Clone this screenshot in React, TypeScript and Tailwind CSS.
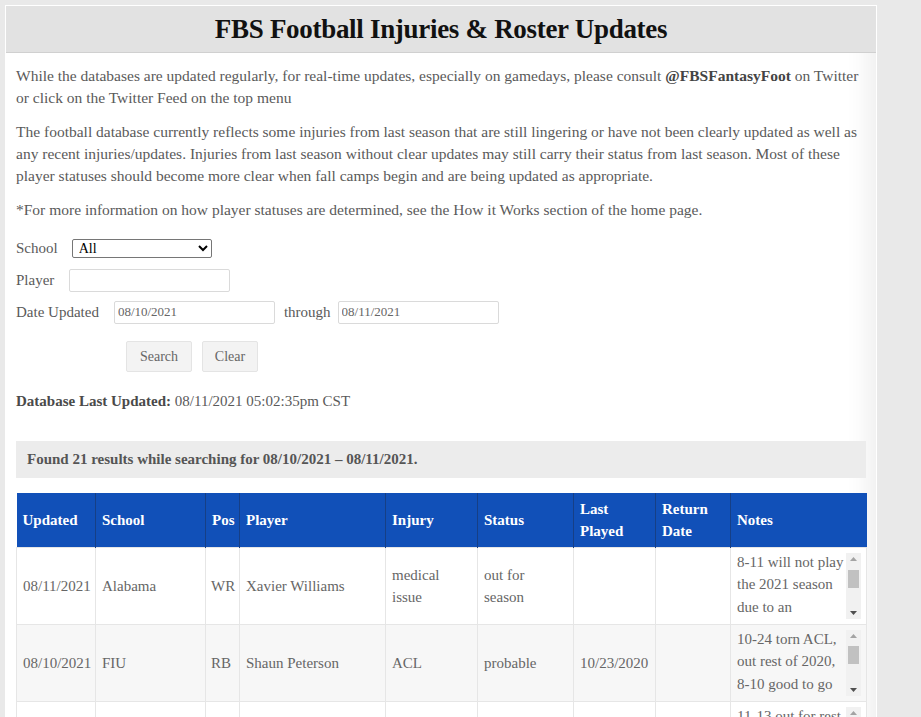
import { useState } from "react";

type Row = {
  updated: string;
  school: string;
  pos: string;
  player: string;
  injury: string;
  status: string;
  lastPlayed: string;
  returnDate: string;
  notes: string[];
};

const rows: Row[] = [
  {
    updated: "08/11/2021",
    school: "Alabama",
    pos: "WR",
    player: "Xavier Williams",
    injury: "medical issue",
    status: "out for season",
    lastPlayed: "",
    returnDate: "",
    notes: ["8-11 will not play", "the 2021 season", "due to an", "undisclosed", "medical issue"],
  },
  {
    updated: "08/10/2021",
    school: "FIU",
    pos: "RB",
    player: "Shaun Peterson",
    injury: "ACL",
    status: "probable",
    lastPlayed: "10/23/2020",
    returnDate: "",
    notes: ["10-24 torn ACL,", "out rest of 2020,", "8-10 good to go"],
  },
  {
    updated: "08/10/2021",
    school: "Georgia",
    pos: "WR",
    player: "Dominick Blaylock",
    injury: "ACL",
    status: "questionable",
    lastPlayed: "12/19/2020",
    returnDate: "",
    notes: ["11-13 out for rest", "of 2020, 8-10", "working back"],
  },
];

const columns = [
  { label: "Updated", width: "w-[79px]" },
  { label: "School", width: "w-[110px]" },
  { label: "Pos", width: "w-[34px]" },
  { label: "Player", width: "w-[146px]" },
  { label: "Injury", width: "w-[92px]" },
  { label: "Status", width: "w-[96px]" },
  { label: "Last Played", width: "w-[82px]" },
  { label: "Return Date", width: "w-[75px]" },
  { label: "Notes", width: "w-[136px]" },
];

function FakeScrollbar({ thumbTop }: { thumbTop: string }) {
  return (
    <div className="w-[15px] shrink-0 bg-[#f1f1f1] flex flex-col items-center justify-between py-[4px] relative">
      <svg width="7" height="4" viewBox="0 0 7 4">
        <path d="M0 4 L3.5 0 L7 4 Z" fill="#a3a3a3" />
      </svg>
      <div className={`absolute left-[2px] right-[2px] h-[18px] bg-[#c1c1c1] ${thumbTop}`}></div>
      <svg width="7" height="4" viewBox="0 0 7 4">
        <path d="M0 0 L3.5 4 L7 0 Z" fill="#505050" />
      </svg>
    </div>
  );
}

export default function App() {
  const [school, setSchool] = useState("All");

  return (
    <div className="min-h-[717px] bg-[#e9e9e9] pl-[5px] pt-[5px] font-['Liberation_Serif',serif]">
      <div className="w-[872px] bg-white border border-white shadow-[inset_-26px_0_24px_-18px_rgba(0,0,0,0.07)]">
        {/* Title band */}
        <div className="h-[47px] bg-[#e2e2e2] border-b border-[#d0d0d0] flex items-center justify-center">
          <h1 className="text-[27px] font-bold text-[#111] tracking-[-0.3px] leading-none">
            FBS Football Injuries &amp; Roster Updates
          </h1>
        </div>

        <div className="px-[10px] pt-[12px] pb-[20px] text-[#5a5a5a]">
          <p className="text-[15.5px] leading-[22px] whitespace-nowrap">
            While the databases are updated regularly, for real-time updates, especially on gamedays, please consult{" "}
            <b className="text-[#444]">@FBSFantasyFoot</b> on Twitter
            <br />
            or click on the Twitter Feed on the top menu
          </p>
          <p className="mt-[12px] text-[15.5px] leading-[22px] whitespace-nowrap">
            The football database currently reflects some injuries from last season that are still lingering or have not been clearly updated as well as
            <br />
            any recent injuries/updates. Injuries from last season without clear updates may still carry their status from last season. Most of these
            <br />
            player statuses should become more clear when fall camps begin and are being updated as appropriate.
          </p>
          <p className="mt-[12px] text-[15.5px] leading-[22px] whitespace-nowrap">
            *For more information on how player statuses are determined, see the How it Works section of the home page.
          </p>

          {/* Search form */}
          <div className="mt-[11px] text-[15px] text-[#5a5a5a]">
            <div className="flex items-center h-[32px]">
              <span className="mr-[14px]">School</span>
              <select
                value={school}
                onChange={(e) => setSchool(e.target.value)}
                className="w-[140px] h-[19px] border border-[#767676] rounded-[2px] text-[14px] text-black bg-white pl-[2px] appearance-auto"
              >
                <option>All</option>
                <option>Alabama</option>
                <option>FIU</option>
              </select>
            </div>
            <div className="flex items-center h-[32px]">
              <span className="mr-[15px]">Player</span>
              <input className="w-[161px] h-[23px] border border-[#dadada] rounded-[2px] bg-white" />
            </div>
            <div className="flex items-center h-[32px]">
              <span className="mr-[15px]">Date Updated</span>
              <input
                defaultValue="08/10/2021"
                className="w-[161px] h-[23px] border border-[#dadada] rounded-[2px] bg-white px-[3px] text-[13px] text-[#666]"
              />
              <span className="ml-[9px] mr-[7px]">through</span>
              <input
                defaultValue="08/11/2021"
                className="w-[161px] h-[23px] border border-[#dadada] rounded-[2px] bg-white px-[3px] text-[13px] text-[#666]"
              />
            </div>
            <div className="flex gap-[10px] pl-[110px] mt-[13px]">
              <button className="w-[66px] h-[31px] bg-[#f3f3f3] border border-[#e4e4e4] rounded-[2px] text-[14px] text-[#666]">
                Search
              </button>
              <button className="w-[56px] h-[31px] bg-[#f3f3f3] border border-[#e4e4e4] rounded-[2px] text-[14px] text-[#666]">
                Clear
              </button>
            </div>
          </div>

          <p className="mt-[18px] text-[15px] text-[#5a5a5a]">
            <b className="text-[#4a4a4a]">Database Last Updated:</b> 08/11/2021 05:02:35pm CST
          </p>

          <div className="mt-[28px] h-[37px] bg-[#ececec] flex items-center px-[11px] text-[15px] font-bold text-[#555]">
            Found 21 results while searching for 08/10/2021 – 08/11/2021.
          </div>

          {/* Results */}
          <table className="mt-[15px] w-[850px] table-fixed border-collapse text-[15px]">
            <colgroup>
              {columns.map((c) => (
                <col key={c.label} className={c.width} />
              ))}
            </colgroup>
            <thead>
              <tr className="bg-[#1150b8] text-white h-[54px]">
                {columns.map((c, i) => (
                  <th
                    key={c.label}
                    className={`text-left font-bold leading-[22px] px-[6px] py-[5px] border-[#163f86] ${i > 0 ? "border-l" : ""}`}
                  >
                    {c.label}
                  </th>
                ))}
              </tr>
            </thead>
            <tbody className="text-[#666]">
              {rows.map((r, idx) => (
                <tr key={r.player} className={idx % 2 === 1 ? "bg-[#f7f7f7]" : "bg-white"}>
                  <td className="border border-[#e6e6e6] px-[6px] leading-[22px]">{r.updated}</td>
                  <td className="border border-[#e6e6e6] px-[6px] leading-[22px]">{r.school}</td>
                  <td className="border border-[#e6e6e6] px-[5px] leading-[22px]">{r.pos}</td>
                  <td className="border border-[#e6e6e6] px-[6px] leading-[22px]">{r.player}</td>
                  <td className="border border-[#e6e6e6] px-[6px] leading-[22px]">{r.injury}</td>
                  <td className="border border-[#e6e6e6] px-[6px] leading-[22px]">{r.status}</td>
                  <td className="border border-[#e6e6e6] px-[6px] leading-[22px]">{r.lastPlayed}</td>
                  <td className="border border-[#e6e6e6] px-[6px] leading-[22px]">{r.returnDate}</td>
                  <td className="border border-[#e6e6e6] pl-[6px] pr-[5px] py-[5px]">
                    <div className="flex h-[66px]">
                      <div className="flex-1 min-w-0 overflow-hidden leading-[22.5px]">
                        <div className="-mt-[2px]">
                          {r.notes.map((line) => (
                            <div key={line} className="whitespace-nowrap">
                              {line}
                            </div>
                          ))}
                        </div>
                      </div>
                      <FakeScrollbar thumbTop={idx === 0 ? "top-[17px]" : "top-[16px]"} />
                    </div>
                  </td>
                </tr>
              ))}
            </tbody>
          </table>
        </div>
      </div>
    </div>
  );
}
